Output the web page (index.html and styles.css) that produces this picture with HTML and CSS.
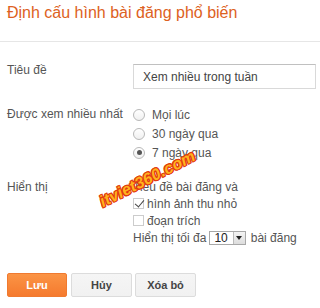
FILE: index.html
```html
<!DOCTYPE html>
<html>
	<head>
		<meta charset="UTF-8">
		<title>Định cấu hình bài đăng phổ biến</title>
		<link rel="stylesheet" href="styles.css">
	</head>
	<body>
		<div class="head">Định cấu hình bài đăng phổ biến</div>
		<div class="form">
			<div class="row first">
				<div class="label">Tiêu đề</div>
				<div class="field"><input class="text" type="text" value="Xem nhiều trong tuần"></div>
			</div>
			<div class="row">
				<div class="label">Được xem nhiều nhất</div>
				<div class="field radios">
					<label class="opt"><input type="radio" name="range"> Mọi lúc</label>
					<label class="opt"><input type="radio" name="range"> 30 ngày qua</label>
					<label class="opt"><input type="radio" name="range" checked> 7 ngày qua</label>
				</div>
			</div>
			<div class="row">
				<div class="label">Hiển thị</div>
				<div class="field checks">
					<div class="opt">Tiêu đề bài đăng và</div>
					<label class="opt"><input type="checkbox" checked> hình ảnh thu nhỏ</label>
					<label class="opt"><input type="checkbox"> đoạn trích</label>
					<div class="opt">Hiển thị tối đa <span class="select"><span class="val">10</span><span class="arrow"></span></span> bài đăng</div>
				</div>
			</div>
			<div class="buttons">
				<button class="btn save">Lưu</button>
				<button class="btn">Hủy</button>
				<button class="btn">Xóa bỏ</button>
			</div>
		</div>
		<div class="mark">itviet360.com</div>
	</body>
</html>
```

FILE: styles.css
```css
body{
	margin: 0;
	font-family: "Liberation Sans", Arial, sans-serif;
	font-size: 12px;
	color: #555;
	background: #fff;
	position: relative;
	height: 308px;
	overflow: hidden;
}
.head{
	height: 42px;
	box-sizing: border-box;
	padding: 3px 7px 0;
	font-size: 16px;
	line-height: 20px;
	color: #dd6122;
	border-bottom: 1px solid #e6e6e6;
}
.form{
	padding: 0 4px 0 7px;
}
.row{
	display: flex;
	margin-top: 16px;
}
.row.first{
	margin-top: 22px;
}
.row:last-of-type{
	margin-top: 17px;
}
.label{
	width: 126px;
	flex: none;
	line-height: 18px;
}
.row.first .label{
	line-height: 13px;
}
.field{
	flex: 1;
}
.text{
	display: block;
	width: 100%;
	box-sizing: border-box;
	height: 25px;
	margin: 0;
	border: 1px solid #d9d9d9;
	border-top-color: #c0c0c0;
	padding: 0 9px;
	font-family: inherit;
	font-size: 12px;
	color: #444;
}
.opt{
	display: flex;
	align-items: center;
	height: 18px;
	white-space: nowrap;
}
.radios .opt{
	height: 19px;
}
.checks .opt{
	height: 17px;
}
.opt input{
	appearance: none;
	-webkit-appearance: none;
	margin: 0 6px 0 0;
	width: 12px;
	height: 12px;
	border: 1px solid #b8b8b8;
	background: linear-gradient(#fff, #f0f0f0);
	position: relative;
	flex: none;
}
.radios .opt input{
	border-radius: 50%;
	margin-right: 7px;
}
.radios .opt input:checked::after{
	content: "";
	position: absolute;
	left: 2.5px;
	top: 2.5px;
	width: 5px;
	height: 5px;
	border-radius: 50%;
	background: #555;
}
.checks .opt input{
	width: 11px;
	height: 11px;
	margin-right: 3px;
	border-color: #ccc;
	background: #fff;
}
.checks .opt input:checked::after{
	content: "";
	position: absolute;
	left: 3px;
	top: -1px;
	width: 4px;
	height: 8px;
	border: solid #444;
	border-width: 0 1.5px 1.5px 0;
	transform: rotate(40deg);
}
.select{
	display: inline-flex;
	height: 14px;
	margin: 0 5px 0 3px;
	border: 1px solid #a8a8a8;
	background: #fff;
	box-sizing: border-box;
}
.select .val{
	padding: 0 5px 0 4px;
	line-height: 12px;
	color: #222;
}
.select .arrow{
	width: 11px;
	border-left: 1px solid #bbb;
	background: linear-gradient(#f4f4f4, #ddd);
	position: relative;
}
.select .arrow::after{
	content: "";
	position: absolute;
	left: 2px;
	top: 4px;
	border: 3.5px solid transparent;
	border-top: 4px solid #222;
}
.buttons{
	display: flex;
	gap: 3px;
	margin-top: 27px;
}
.btn{
	width: 61px;
	height: 24px;
	margin: 0;
	padding: 0;
	border: 1px solid #dcdcdc;
	border-radius: 2px;
	background: linear-gradient(#f5f5f5, #f1f1f1);
	font-family: inherit;
	font-size: 11px;
	font-weight: bold;
	color: #444;
}
.btn.save{
	width: 60px;
	border-color: #f07a30;
	background: linear-gradient(#fb9445, #f57a2e);
	color: #fff;
	margin-right: 1px;
}
.mark{
	position: absolute;
	left: 95px;
	top: 170px;
	transform: rotate(-27deg);
	transform-origin: center;
	font-size: 16px;
	font-weight: bold;
	font-style: italic;
	letter-spacing: 0.3px;
	color: #ffb21e;
	text-shadow: 1px 0 0 #e23a10, -1px 0 0 #e23a10, 0 1px 0 #e23a10, 0 -1px 0 #e23a10, 1px 1px 0 #e23a10, -1px -1px 0 #e23a10, 1px -1px 0 #e23a10, -1px 1px 0 #e23a10;
}
```
